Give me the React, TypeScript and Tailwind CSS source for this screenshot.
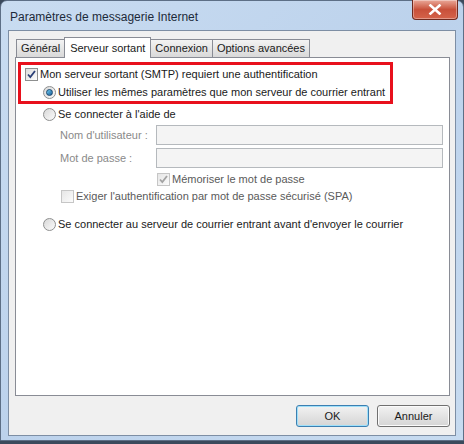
import React from "react";

const font = { fontFamily: '"Liberation Sans", Arial, sans-serif' };

function CheckBox({ checked, disabled }: { checked?: boolean; disabled?: boolean }) {
  return (
    <span
      className={
        "relative inline-flex h-[13px] w-[13px] shrink-0 items-center justify-center border " +
        (disabled
          ? "border-[#c6c6c6] bg-gradient-to-br from-[#e6e6e6] to-[#fbfbfb]"
          : "border-[#8e8f8f] bg-gradient-to-br from-[#dcdcdc] to-[#fdfdfd]")
      }
    >
      {checked && (
        <svg width="11" height="11" viewBox="0 0 11 11">
          <path
            d="M2 5.5 L4.3 8 L9 2"
            fill="none"
            stroke={disabled ? "#a3a3a3" : "#2a3f77"}
            strokeWidth="1.8"
          />
        </svg>
      )}
    </span>
  );
}

function Radio({ checked }: { checked?: boolean }) {
  return (
    <span className="inline-flex h-[13px] w-[13px] shrink-0 items-center justify-center rounded-full border border-[#8e8f8f] bg-gradient-to-br from-[#d8d8d8] to-[#fbfbfb]">
      {checked && (
        <span className="h-[7px] w-[7px] rounded-full border border-[#17466f] bg-gradient-to-br from-[#6fd0f8] to-[#1d5d94]" />
      )}
    </span>
  );
}

function Tab({ label, active }: { label: string; active?: boolean }) {
  if (active) {
    return (
      <div className="relative z-10 -mb-[1px] -ml-[1px] flex h-[21px] items-center border border-b-0 border-[#898c95] bg-white px-[5px] text-[11px] text-[#1a1a1a]">
        {label}
      </div>
    );
  }
  return (
    <div className="flex h-[18px] items-center border border-b-0 border-[#898c95] bg-gradient-to-b from-[#f3f3f3] to-[#d9d9d9] px-[4px] text-[11px] text-[#1a1a1a] [&:not(:first-child)]:-ml-[1px]">
      {label}
    </div>
  );
}

export default function App() {
  return (
    <div className="h-[444px] w-[464px] overflow-hidden bg-[#3b4a5c]" style={font}>
      <div className="flex h-[441px] w-[464px] flex-col rounded-t-[7px] border border-[#5d6f86] bg-gradient-to-br from-[#c9dcf1] via-[#bcd2ec] to-[#c7dbf0] pl-[7px] pr-[7px] pb-[4px]">
        {/* title bar */}
        <div className="flex h-[30px] items-start justify-between">
          <div className="pl-[2px] pt-[9px] text-[12px] leading-[14px] text-[#1d2a3a]">
            Paramètres de messagerie Internet
          </div>
          <div className="-mt-px mr-[-2px] flex h-[20px] w-[46px] items-center justify-center rounded-b-[4px] border border-t-0 border-[#6f2a1f] bg-gradient-to-b from-[#e9a899] via-[#c8503a] to-[#d5634a] shadow-[inset_0_0_0_1px_rgba(255,255,255,0.35)]">
            <svg width="14" height="11" viewBox="0 0 14 11">
              <path d="M2.5 1.5 L11.5 9.5 M11.5 1.5 L2.5 9.5" stroke="#ffffff" strokeWidth="2.6" strokeLinecap="square" />
            </svg>
          </div>
        </div>

        {/* client area */}
        <div className="flex flex-1 flex-col border border-[#7d8ea4] bg-[#f0f0f0] pl-[6px] pr-[5px] pt-[6px] pb-[8px]">
          <div className="flex h-[20px] items-end pl-[1px]">
            <Tab label="Général" />
            <Tab label="Serveur sortant" active />
            <Tab label="Connexion" />
            <Tab label="Options avancées" />
          </div>

          <div className="flex h-[339px] flex-col border border-[#898c95] bg-white text-[11px] text-[#1a1a1a]">
            {/* highlighted block */}
            <div className="ml-[2px] mt-[4px] flex h-[42px] w-[375px] flex-col border-[3px] border-[#e8101c]">
              <div className="flex h-[17px] items-center gap-[2px] pl-[4px] pt-[1px]">
                <CheckBox checked />
                <span>Mon serveur sortant (SMTP) requiert une authentification</span>
              </div>
              <div className="mt-[3px] flex h-[15px] items-center gap-[2px] pl-[22px]">
                <Radio checked />
                <span>Utiliser les mêmes paramètres que mon serveur de courrier entrant</span>
              </div>
            </div>

            <div className="ml-[27px] mt-[2px] flex h-[16px] items-center gap-[2px]">
              <Radio />
              <span>Se connecter à l'aide de</span>
            </div>

            <div className="mt-[3px] flex h-[20px] items-center">
              <span className="ml-[44px] w-[96px] text-[#8a8a8a]">Nom d'utilisateur :</span>
              <div className="h-[20px] w-[287px] border border-[#b5b9bd] bg-[#f4f4f4]" />
            </div>
            <div className="mt-[3px] flex h-[20px] items-center">
              <span className="ml-[44px] w-[96px] text-[#8a8a8a]">Mot de passe :</span>
              <div className="h-[20px] w-[287px] border border-[#b5b9bd] bg-[#f4f4f4]" />
            </div>

            <div className="ml-[141px] mt-[4px] flex h-[15px] items-center gap-[2px] text-[#5a5a5a]">
              <CheckBox checked disabled />
              <span>Mémoriser le mot de passe</span>
            </div>
            <div className="ml-[45px] mt-[2px] flex h-[15px] items-center gap-[2px] text-[#5a5a5a]">
              <CheckBox disabled />
              <span>Exiger l'authentification par mot de passe sécurisé (SPA)</span>
            </div>

            <div className="ml-[27px] mt-[13px] flex h-[15px] items-center gap-[2px]">
              <Radio />
              <span>Se connecter au serveur de courrier entrant avant d'envoyer le courrier</span>
            </div>
          </div>

          <div className="mt-[9px] flex justify-end gap-[8px] pr-[0px]">
            <button className="flex h-[22px] w-[73px] items-center justify-center rounded-[3px] border border-[#3c7fb1] bg-gradient-to-b from-[#f2f2f2] to-[#d5d5d5] text-[11px] text-[#1a1a1a] shadow-[inset_0_0_0_1px_#9fe0fa]">
              OK
            </button>
            <button className="flex h-[22px] w-[73px] items-center justify-center rounded-[3px] border border-[#707070] bg-gradient-to-b from-[#f2f2f2] to-[#d5d5d5] text-[11px] text-[#1a1a1a] shadow-[inset_0_0_0_1px_#fbfbfb]">
              Annuler
            </button>
          </div>
        </div>
      </div>
    </div>
  );
}
